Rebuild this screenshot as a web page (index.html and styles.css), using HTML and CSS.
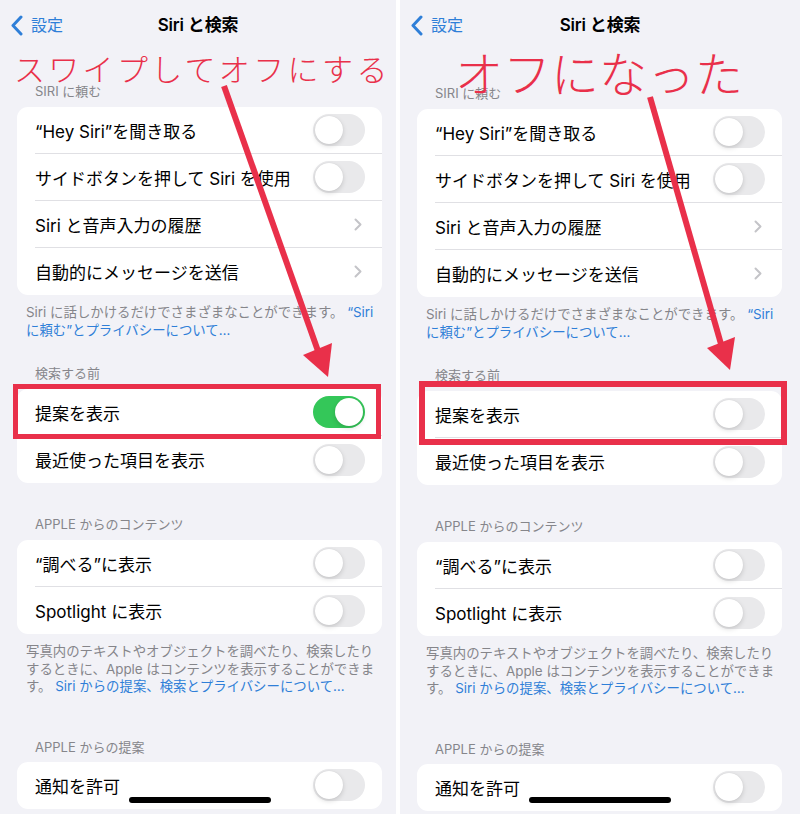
FILE: index.html
```html
<!DOCTYPE html>
<html lang="ja">
<head>
    <meta charset="UTF-8">
    <meta name="viewport" content="width=device-width, initial-scale=1.0">
    <title>Siri と検索</title>
    <link rel="stylesheet" href="styles.css">
</head>
<body>
    <div class="shots">
        <!-- before -->
        <section class="phone">
            <header class="nav">
                <span class="back">
                    <svg width="13" height="21" viewBox="0 0 13 21"><path d="M11 2 L3 10.5 L11 19" fill="none" stroke="#2f7fd8" stroke-width="3" stroke-linecap="round" stroke-linejoin="round"/></svg>
                    設定
                </span>
                <h1 class="title">Siri と検索</h1>
            </header>

            <div class="list">
                <h2 class="group-title">SIRI に頼む</h2>
                <div class="group">
                    <div class="row"><span>“Hey Siri”を聞き取る</span><span class="switch"></span></div>
                    <div class="row"><span>サイドボタンを押して Siri を使用</span><span class="switch"></span></div>
                    <div class="row"><span>Siri と音声入力の履歴</span><svg class="chev" width="8" height="13" viewBox="0 0 8 13"><path d="M1.5 1.5 L6.5 6.5 L1.5 11.5" fill="none" stroke="#c4c4c8" stroke-width="2" stroke-linecap="round" stroke-linejoin="round"/></svg></div>
                    <div class="row"><span>自動的にメッセージを送信</span><svg class="chev" width="8" height="13" viewBox="0 0 8 13"><path d="M1.5 1.5 L6.5 6.5 L1.5 11.5" fill="none" stroke="#c4c4c8" stroke-width="2" stroke-linecap="round" stroke-linejoin="round"/></svg></div>
                </div>
                <p class="group-note">Siri に話しかけるだけでさまざまなことができます。 <a>“Siri<br>に頼む”とプライバシーについて…</a></p>

                <h2 class="group-title after-note">検索する前</h2>
                <div class="group">
                    <div class="row"><span>提案を表示</span><span class="switch on"></span></div>
                    <div class="row"><span>最近使った項目を表示</span><span class="switch"></span></div>
                </div>

                <h2 class="group-title after-group">APPLE からのコンテンツ</h2>
                <div class="group">
                    <div class="row"><span>“調べる”に表示</span><span class="switch"></span></div>
                    <div class="row"><span>Spotlight に表示</span><span class="switch"></span></div>
                </div>
                <p class="group-note">写真内のテキストやオブジェクトを調べたり、検索したり<br>するときに、Apple はコンテンツを表示することができま<br>す。 <a>Siri からの提案、検索とプライバシーについて…</a></p>

                <h2 class="group-title after-long-note">APPLE からの提案</h2>
                <div class="group">
                    <div class="row"><span>通知を許可</span><span class="switch"></span></div>
                </div>
            </div>

            <div class="home-bar"></div>

            <p class="callout callout-swipe">スワイプしてオフにする</p>
            <svg class="arrow" viewBox="0 0 396 814">
                <line x1="224" y1="86" x2="318" y2="351" stroke="#e9304a" stroke-width="6"/>
                <polygon points="303,355 332,343 328,377" fill="#e9304a"/>
            </svg>
            <div class="mark mark-before"></div>
        </section>

        <div class="divider"></div>

        <!-- after -->
        <section class="phone phone-after">
            <header class="nav">
                <span class="back">
                    <svg width="13" height="21" viewBox="0 0 13 21"><path d="M11 2 L3 10.5 L11 19" fill="none" stroke="#2f7fd8" stroke-width="3" stroke-linecap="round" stroke-linejoin="round"/></svg>
                    設定
                </span>
                <h1 class="title">Siri と検索</h1>
            </header>

            <div class="list">
                <h2 class="group-title">SIRI に頼む</h2>
                <div class="group">
                    <div class="row"><span>“Hey Siri”を聞き取る</span><span class="switch"></span></div>
                    <div class="row"><span>サイドボタンを押して Siri を使用</span><span class="switch"></span></div>
                    <div class="row"><span>Siri と音声入力の履歴</span><svg class="chev" width="8" height="13" viewBox="0 0 8 13"><path d="M1.5 1.5 L6.5 6.5 L1.5 11.5" fill="none" stroke="#c4c4c8" stroke-width="2" stroke-linecap="round" stroke-linejoin="round"/></svg></div>
                    <div class="row"><span>自動的にメッセージを送信</span><svg class="chev" width="8" height="13" viewBox="0 0 8 13"><path d="M1.5 1.5 L6.5 6.5 L1.5 11.5" fill="none" stroke="#c4c4c8" stroke-width="2" stroke-linecap="round" stroke-linejoin="round"/></svg></div>
                </div>
                <p class="group-note">Siri に話しかけるだけでさまざまなことができます。 <a>“Siri<br>に頼む”とプライバシーについて…</a></p>

                <h2 class="group-title after-note">検索する前</h2>
                <div class="group">
                    <div class="row"><span>提案を表示</span><span class="switch"></span></div>
                    <div class="row"><span>最近使った項目を表示</span><span class="switch"></span></div>
                </div>

                <h2 class="group-title after-group">APPLE からのコンテンツ</h2>
                <div class="group">
                    <div class="row"><span>“調べる”に表示</span><span class="switch"></span></div>
                    <div class="row"><span>Spotlight に表示</span><span class="switch"></span></div>
                </div>
                <p class="group-note">写真内のテキストやオブジェクトを調べたり、検索したり<br>するときに、Apple はコンテンツを表示することができま<br>す。 <a>Siri からの提案、検索とプライバシーについて…</a></p>

                <h2 class="group-title after-long-note">APPLE からの提案</h2>
                <div class="group">
                    <div class="row"><span>通知を許可</span><span class="switch"></span></div>
                </div>
            </div>

            <div class="home-bar"></div>

            <p class="callout callout-off">オフになった</p>
            <svg class="arrow" viewBox="0 0 400 814">
                <line x1="250" y1="97" x2="321" y2="344" stroke="#e9304a" stroke-width="6"/>
                <polygon points="307,348 335,337 330,370" fill="#e9304a"/>
            </svg>
            <div class="mark mark-after"></div>
        </section>
    </div>
</body>
</html>
```

FILE: styles.css
```css
body {
    margin: 0;
    background-color: #fff;
    font-family: 'Inter', 'Noto Sans CJK JP', sans-serif;
    color: #000;
}

.shots {
    display: grid;
    grid-template-columns: 396px 4px 400px;
    width: 800px;
    height: 814px;
}

.divider {
    background-color: #fff;
}

.phone {
    position: relative;
    overflow: hidden;
    background-color: #f2f2f7;
}

/* navigation bar */
.nav {
    position: relative;
    height: 50px;
    display: flex;
    align-items: center;
    justify-content: center;
}

.back {
    position: absolute;
    left: 10px;
    top: 15px;
    display: flex;
    align-items: center;
    gap: 8px;
    font-size: 16px;
    line-height: 21px;
    color: #2f7fd8;
}

.title {
    margin: -3px 0 0;
    font-size: 17px;
    font-weight: 600;
    letter-spacing: -0.2px;
}

/* grouped list */
.list {
    padding-top: 33px;
}

.phone-after .list {
    padding-top: 35px;
}

.group-title {
    margin: 0 0 8px 35px;
    font-size: 13px;
    line-height: 16px;
    font-weight: 400;
    color: #86868b;
}

.group-title.after-note {
    margin-top: 26px;
}

.group-title.after-group {
    margin-top: 33px;
}

.group-title.after-long-note {
    margin-top: 43px;
    margin-bottom: 7px;
}

.group {
    width: 365px;
    margin-left: 17px;
    background-color: #fff;
    border-radius: 11px;
    overflow: hidden;
}

.row {
    height: 47px;
    margin-left: 18px;
    padding-right: 17px;
    display: flex;
    align-items: center;
    justify-content: space-between;
    box-sizing: border-box;
    border-bottom: 1px solid #e0e0e4;
    font-size: 17px;
}

.row:last-child {
    border-bottom: none;
}

.chev {
    margin-right: 3px;
}

.switch {
    position: relative;
    width: 52px;
    height: 32px;
    border-radius: 16px;
    background-color: #e9e9eb;
    flex-shrink: 0;
}

.switch::after {
    content: '';
    position: absolute;
    top: 2px;
    left: 2px;
    width: 28px;
    height: 28px;
    border-radius: 50%;
    background-color: #fff;
    box-shadow: 0 2px 5px rgba(0, 0, 0, 0.15), 0 0 1px rgba(0, 0, 0, 0.1);
}

.switch.on {
    background-color: #34c759;
}

.switch.on::after {
    left: 22px;
}

.group-note {
    margin: 9px 0 0 26px;
    font-size: 13.4px;
    line-height: 17.5px;
    color: #85858a;
    white-space: nowrap;
}

.group-note a {
    color: #2f7fd8;
}

.home-bar {
    position: absolute;
    left: 129px;
    top: 797px;
    width: 142px;
    height: 6px;
    border-radius: 3px;
    background-color: #000;
}

/* red annotations */
.callout {
    position: absolute;
    margin: 0;
    font-family: 'Noto Sans CJK JP', sans-serif;
    font-weight: 300;
    line-height: 1;
    color: #e9304a;
    white-space: nowrap;
}

.callout-swipe {
    left: 14px;
    top: 52px;
    font-size: 31px;
    letter-spacing: 3.3px;
}

.callout-off {
    left: 55px;
    top: 47px;
    font-size: 48px;
}

.arrow {
    position: absolute;
    left: 0;
    top: 0;
    width: 100%;
    height: 100%;
    pointer-events: none;
}

.mark {
    position: absolute;
    box-sizing: border-box;
    border: 5px solid #e9304a;
}

.mark-before {
    left: 13px;
    top: 384px;
    width: 368px;
    height: 55px;
}

.mark-after {
    left: 19px;
    top: 381px;
    width: 368px;
    height: 64px;
    border-width: 6px;
}
```
